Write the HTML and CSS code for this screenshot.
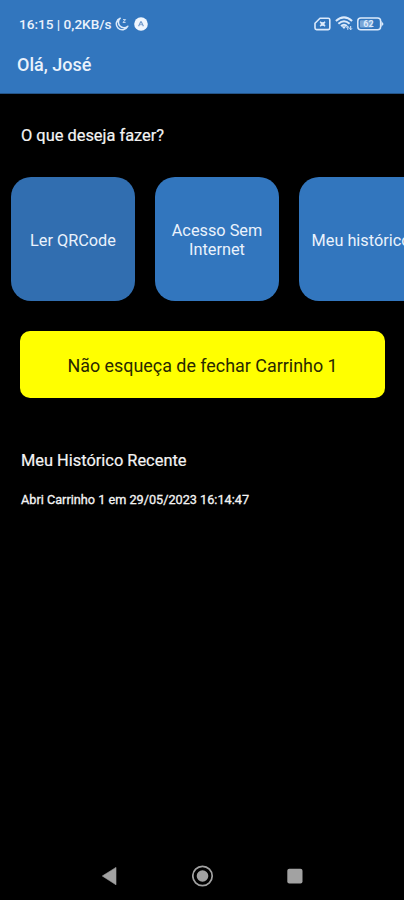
FILE: index.html
```html
<!DOCTYPE html>
<html lang="pt-BR">
<head>
<meta charset="utf-8">
<meta name="viewport" content="width=device-width, initial-scale=1">
<title>Início</title>
<link rel="stylesheet" href="styles.css">
</head>
<body>
<header class="top">
  <div class="status">
    <span class="status-text">16:15 | 0,2KB/s</span>
    <svg class="moon" width="14" height="14" viewBox="0 0 14 14"><path d="M5.2 1.2A6 6 0 1 0 12.8 9.3A5.3 5.3 0 0 1 5.2 1.2Z" fill="none" stroke="currentColor" stroke-width="1.5" stroke-linejoin="round"/><path d="M8 2.6h2.6L8 5.4h2.6" fill="none" stroke="currentColor" stroke-width=".9"/></svg>
    <svg class="badge" width="14" height="14" viewBox="0 0 14 14"><circle cx="7" cy="7" r="6.8" fill="currentColor"/><path d="M4.6 9.2L6.7 4.8h.6l2.1 4.4M7 7v1.3" fill="none" stroke="#7199ca" stroke-width="1.2"/></svg>
    <div class="status-icons">
      <svg width="17" height="14" viewBox="0 0 17 14"><path d="M6 1.2H14.2Q15.8 1.2 15.8 2.8V11Q15.8 12.6 14.2 12.6H2.6Q1 12.6 1 11V6.2Z" fill="none" stroke="currentColor" stroke-width="1.6" stroke-linejoin="round"/><path d="M6.1 4.7l5 4.6M11.1 4.7l-5 4.6" stroke="currentColor" stroke-width="1.5"/><rect x="6.7" y="5.2" width="3.8" height="3.6" fill="currentColor"/></svg>
      <svg width="18" height="15" viewBox="0 0 18 15"><g fill="none" stroke="currentColor" stroke-width="2"><path d="M.9 5.1Q9-2.3 17.1 5.1"/><path d="M3.4 7.8Q9 2.8 14.6 7.8"/><path d="M6 10.1Q9 7.4 12 10.1"/></g><path d="M6.4 10.3h4.8L9 13Z" fill="currentColor"/><path d="M12.8 13.8v-3.2M11.5 11.8l1.3-1.5 1.3 1.5M15.7 10v3.5M14.4 12.3l1.3 1.5 1.3-1.5" fill="none" stroke="currentColor"/></svg>
      <svg width="27" height="14" viewBox="0 0 27 14"><rect x=".8" y="1" width="22.8" height="11.8" rx="3" fill="none" stroke="currentColor" stroke-width="1.5"/><rect x="3" y="3.2" width="12.5" height="7.4" rx="1" fill="currentColor" opacity=".42"/><path d="M24.3 3.8L26.6 6.9L24.3 10Z" fill="currentColor"/><text class="charge" x="11.5" y="10.1" text-anchor="middle">62</text></svg>
    </div>
  </div>
  <h1 class="greeting">Olá, José</h1>
</header>
<main>
  <h2 class="question">O que deseja fazer?</h2>
  <div class="cards">
    <button class="card card-active">Ler QRCode</button>
    <button class="card">Acesso Sem Internet</button>
    <button class="card">Meu histórico</button>
  </div>
  <div class="notice">Não esqueça de fechar Carrinho 1</div>
  <h2 class="recent">Meu Histórico Recente</h2>
  <p class="entry">Abri Carrinho 1 em 29/05/2023 16:14:47</p>
</main>
<nav class="nav">
  <svg width="22" height="22" viewBox="0 0 22 22"><path d="M3.3 11L17 2.4V19.8Z" fill="currentColor" stroke="currentColor" stroke-width=".6" stroke-linejoin="round"/></svg>
  <svg width="22" height="22" viewBox="0 0 22 22"><circle cx="10.5" cy="11" r="9.7" fill="none" stroke="currentColor" stroke-width="1.7"/><circle cx="10.5" cy="11" r="5.8" fill="currentColor"/></svg>
  <svg width="22" height="22" viewBox="0 0 22 22"><rect x="3.3" y="3.8" width="15.2" height="14.8" rx="2" fill="currentColor"/></svg>
</nav>
</body>
</html>
```
FILE: styles.css
```css
* { box-sizing: border-box; }
body {
  margin: 0;
  height: 900px;
  display: flex;
  flex-direction: column;
  overflow: hidden;
  background: #000;
  color: #f4f4f4;
  font-family: Roboto, sans-serif;
}
h1, h2, p { margin: 0; white-space: nowrap; }
.top {
  height: 94px;
  flex: none;
  background: #3276be;
  border-bottom: 1px solid #245487;
  color: #eaf2fc;
}
.status {
  height: 46px;
  padding: 1px 20px 0 19px;
  display: flex;
  align-items: center;
}
.status-text {
  width: 96px;
  font-size: 13.6px;
  font-weight: 500;
  white-space: nowrap;
}
.status svg { color: #dceafb; flex: none; display: block; }
.status .badge { margin-left: 5px; color: #f0f6fe; }
.status-icons {
  margin-left: auto;
  display: flex;
  align-items: center;
  gap: 4px;
}
.charge { font-size: 9px; font-weight: 700; fill: currentColor; }
.greeting {
  padding-left: 17px;
  font-size: 18px;
  line-height: 38px;
  font-weight: 500;
}
main { flex: 1; }
.question, .recent {
  padding-left: 21px;
  font-size: 16.4px;
  line-height: 24px;
  font-weight: 400;
  -webkit-text-stroke: .2px currentColor;
}
.question { margin-top: 30px; }
.cards {
  margin: 29px 0 0 11px;
  display: flex;
  gap: 20px;
  overflow: hidden;
}
.card {
  flex: none;
  width: 124px;
  height: 124px;
  padding: 2px 10px 0;
  border: 0;
  border-radius: 20px;
  background: #3276be;
  color: #eaf2fc;
  font: 400 16.3px/19px Roboto, sans-serif;
}
.card-active { background: #316eb0; }
.card:last-child { white-space: nowrap; }
.notice {
  margin: 30px 19px 0 20px;
  height: 67px;
  border-radius: 10px;
  background: #ff0;
  color: #282800;
  font-size: 17.9px;
  line-height: 69px;
  text-align: center;
  white-space: nowrap;
}
.recent { margin-top: 51px; }
.entry {
  margin-top: 17px;
  padding-left: 21px;
  font-size: 12.7px;
  line-height: 20px;
  font-weight: 400;
  -webkit-text-stroke: .3px currentColor;
}
.nav {
  height: 48px;
  flex: none;
  padding: 0 98px 0 99px;
  display: flex;
  align-items: center;
  justify-content: space-between;
  color: #a2a2a2;
}
```
